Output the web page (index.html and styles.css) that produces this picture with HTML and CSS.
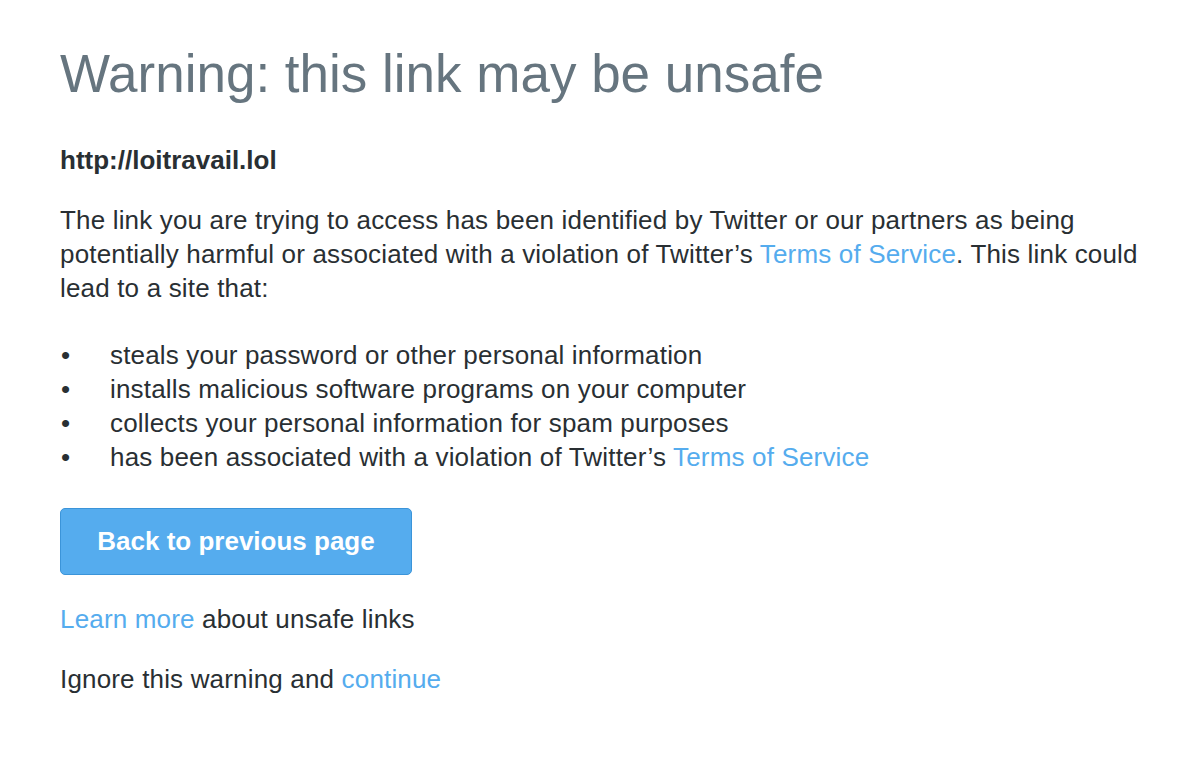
FILE: index.html
```html
<!DOCTYPE html>
<html>
<head>
<meta charset="utf-8">
<link rel="stylesheet" href="styles.css">
</head>
<body>
<main class="page">
  <h1 class="title">Warning: this link may be unsafe</h1>
  <p class="url">http://loitravail.lol</p>
  <p class="desc">The link you are trying to access has been identified by Twitter or our partners as being potentially harmful or associated with a violation of Twitter’s <a href="#" class="link">Terms of Service</a>. This link could lead to a site that:</p>
  <ul class="reasons">
    <li><span>steals your password or other personal information</span></li>
    <li><span>installs malicious software programs on your computer</span></li>
    <li><span>collects your personal information for spam purposes</span></li>
    <li><span>has been associated with a violation of Twitter’s <a href="#" class="link">Terms of Service</a></span></li>
  </ul>
  <button class="back-btn">Back to previous page</button>
  <p class="line learn"><a href="#" class="link">Learn more</a> about unsafe links</p>
  <p class="line ignore">Ignore this warning and <a href="#" class="link">continue</a></p>
</main>
</body>
</html>
```
FILE: styles.css
```css
html, body {
  margin: 0;
  padding: 0;
  background: #ffffff;
}
body {
  font-family: "Liberation Sans", Arial, Helvetica, sans-serif;
  color: #292f33;
}
.page {
  padding: 36px 40px 0 60px;
}
.title {
  margin: 0;
  font-size: 53px;
  font-weight: 400;
  line-height: 76px;
  color: #66757f;
}
.url {
  margin: 31px 0 0;
  font-size: 26px;
  font-weight: 700;
  line-height: 34px;
}
.desc {
  margin: 26px 0 0;
  font-size: 26px;
  line-height: 34px;
  letter-spacing: 0.17px;
}
.link {
  color: #55acee;
  text-decoration: none;
}
.reasons {
  margin: 33px 0 0;
  padding: 0;
  list-style: none;
  font-size: 26px;
  line-height: 34px;
  letter-spacing: 0.17px;
}
.reasons li {
  display: flex;
}
.reasons li::before {
  content: "•";
  flex: none;
  width: 50px;
  padding-left: 1px;
  box-sizing: border-box;
}
.back-btn {
  display: block;
  margin-top: 34px;
  width: 352px;
  height: 67px;
  border: 1px solid #3b94d9;
  border-radius: 5px;
  background: #55acee;
  color: #ffffff;
  font-family: inherit;
  font-size: 26px;
  font-weight: 700;
}
.line {
  margin: 0;
  font-size: 26px;
  line-height: 34px;
  letter-spacing: 0.17px;
}
.learn {
  margin-top: 27px;
}
.ignore {
  margin-top: 26px;
}
```
